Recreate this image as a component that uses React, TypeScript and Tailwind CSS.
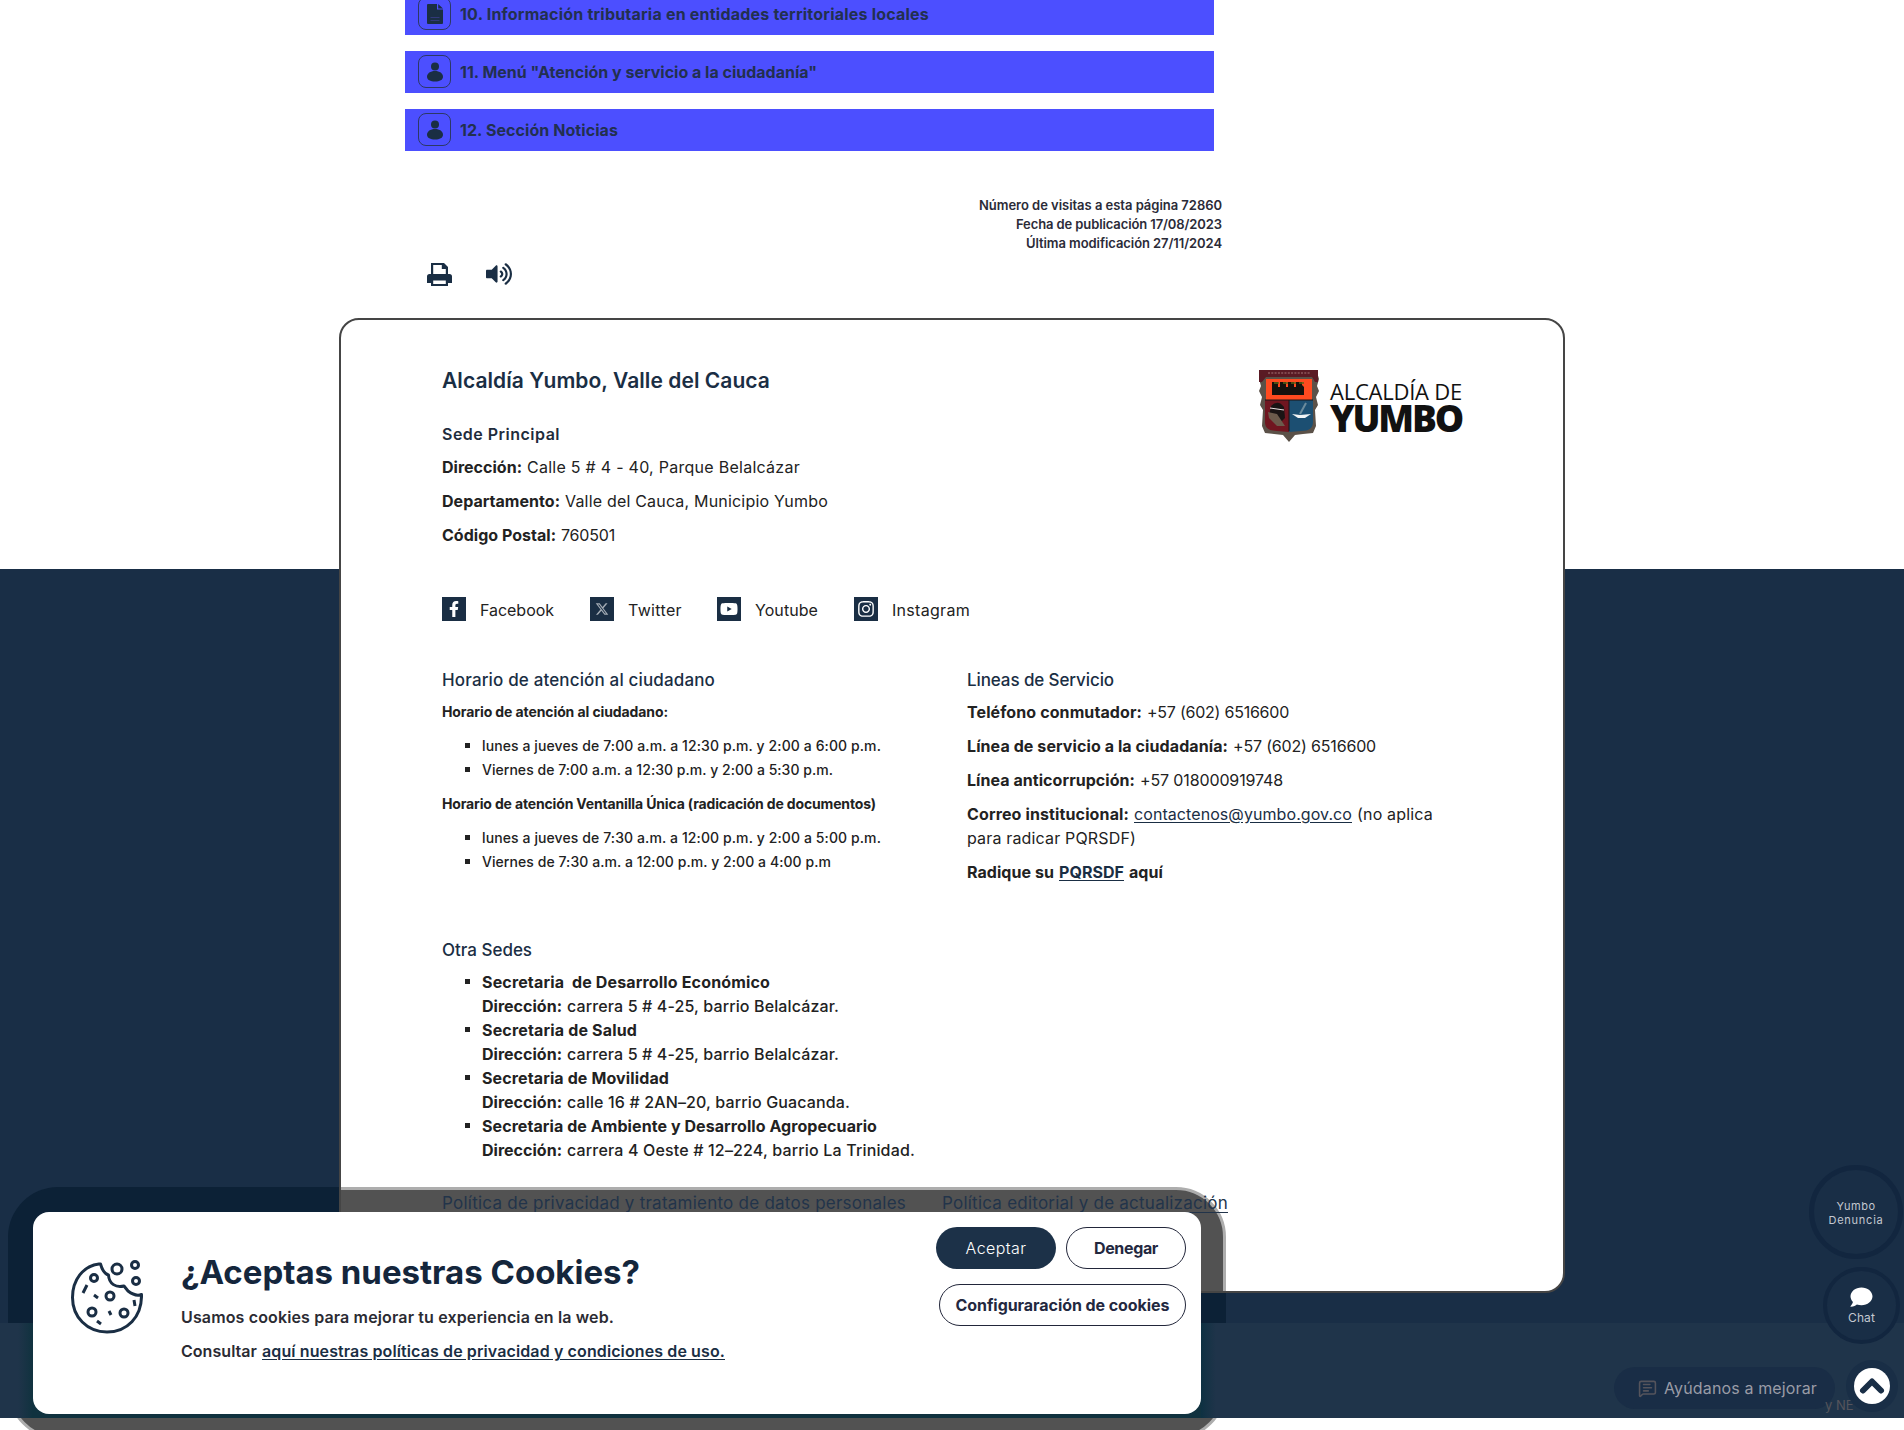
import { useLayoutEffect, useRef, useState } from "react";
import type { ReactNode } from "react";
import { FaFacebookF, FaInstagram, FaYoutube, FaComment, FaVolumeUp } from "react-icons/fa";
import { FaXTwitter } from "react-icons/fa6";
import { ChevronUp, MessageSquareText } from "lucide-react";

/** A run of text whose letter spacing is computed so that it fills `w` pixels. */
function Fit({ w, children, className = "" }: { w: number; children: string; className?: string }) {
  const ref = useRef<HTMLSpanElement>(null);
  const [spacing, setSpacing] = useState(0);
  useLayoutEffect(() => {
    const el = ref.current;
    if (!el) return;
    el.style.letterSpacing = "0px";
    const natural = el.getBoundingClientRect().width;
    const next = (w - natural) / children.length;
    el.style.letterSpacing = `${next}px`;
    setSpacing(next);
  }, [w, children]);
  return (
    <span ref={ref} className={`inline-block whitespace-pre ${className}`} style={{ letterSpacing: spacing }}>
      {children}
    </span>
  );
}

function FileGlyph() {
  return (
    <svg viewBox="0 0 16 20" className="h-5 w-4" fill="#1a2e44">
      <path d="M0 1a1 1 0 0 1 1-1h9v5.500h6V19a1 1 0 0 1-1 1H1a1 1 0 0 1-1-1z" />
      <path d="M11.200 0 16 4.500h-4.800z" />
      <path d="M3.500 13.500h9M3.500 16.500h9" stroke="#4141a0" strokeWidth=".6" />
    </svg>
  );
}

function PersonGlyph() {
  return (
    <svg viewBox="0 0 16 20" className="h-5 w-4" fill="#1a2e44">
      <circle cx="8" cy="4.500" r="4" />
      <path d="M8 9c4.600 0 8 2.300 8 5.800 0 3.200-3.400 4.700-8 4.700s-8-1.500-8-4.700C0 11.300 3.400 9 8 9z" />
    </svg>
  );
}

function MenuBar({ icon, w, children }: { icon: ReactNode; w: number; children: string }) {
  return (
    <div className="flex h-[42px] w-[809px] items-center bg-[#4c4fff] pb-px pl-[13px]">
      <div className="flex size-[33px] items-center justify-center rounded-lg border border-[#2c3866]">{icon}</div>
      <Fit w={w} className="ml-[9px] text-base font-bold text-[#22304f]">{children}</Fit>
    </div>
  );
}

function Shield() {
  return (
    <svg viewBox="0 0 62 72" className="h-[72px] w-[62px]">
      <path
        d="M3 2h56l2 7-2 7 2 5-3 6 2 8-3 5 1 16-3 7-10 1-8 1-6 7-6-7-9-1-9-1-3-7 1-16-3-5 2-8-3-6 2-5-2-7z"
        fill="#5b5148"
      />
      <path d="M1 0h59v12h-3l-3-5H8l-4 5H1z" fill="#5a1a24" />
      <path d="M10 3h42" stroke="#b98c8c" strokeWidth="2" strokeDasharray="2 1.300" opacity=".4" />
      <path d="M8 9h46v21H8z" fill="#ff4a1f" />
      <path d="M14 25V12h6v5h2v-5h6v5h2v-5h6v5h2v-5h6v3l2 2v8z" fill="#15110d" />
      <path d="M16 13h5M25 13h5M33 13h5M41 13h5" stroke="#5d6415" strokeWidth="1.500" />
      <path d="M7 30h24v32l-12-1c-8 0-12-3-12-9z" fill="#701620" />
      <path d="M31 30h24v22c0 6-4 9-12 9l-12 1z" fill="#1c4f72" />
      <path d="M31 30v31M7 30h48" stroke="#1b1414" />
      <path d="M13 36q7-7 13 1l1 11-6 6-5-4-5-4z" fill="#1a1414" />
      <path d="M10 42l9 2 8 12-8 0-8-8z" fill="#6c5b4c" />
      <path d="M12 38l14 2" stroke="#e8dede" strokeWidth="1.200" />
      <path d="M34 44l8 1 11-1-6 4h-7z" fill="#f2f4f5" />
      <path d="M42 44l6-11" stroke="#6c8b9c" strokeWidth="2" />
    </svg>
  );
}

function Cookie() {
  return (
    <svg viewBox="0 0 72 74" className="h-[74px] w-[72px]" fill="none" stroke="#1a2e44" strokeWidth="3">
      <path
        strokeLinejoin="round"
        d="M28 4C12 6 1.500 20 1.500 37.500 1.500 57 16 72 36 72s35-15 34.500-37.500c-4 1.500-9 0-13.500-3.500L53 26c-8 2-15-2-15.500-11-4-1-6-4-8-11z"
      />
      <circle cx="46" cy="9" r="5" />
      <circle cx="64" cy="5" r="3.500" />
      <circle cx="65" cy="21" r="3.500" />
      <circle cx="23" cy="18" r="3.500" />
      <circle cx="39" cy="36" r="4" />
      <circle cx="21" cy="52" r="4" />
      <circle cx="53" cy="53" r="4" />
      <path d="M16 25l-4 8M23 35l4 3M63 40l1 6M38 51l2 4M26 61l4 3" />
    </svg>
  );
}

function Printer() {
  return (
    <svg viewBox="0 0 25 23" className="h-[23px] w-[25px]" fill="#1a2e44" fillRule="evenodd">
      <path d="M4 0h13l4 4v7h1.500A2.500 2.500 0 0 1 25 13.500V20h-4v3H4v-3H0v-6.500A2.500 2.500 0 0 1 2.500 11H4zM6.200 2v9h12.600V6h-4V2zM6.200 17.500V21h12.600v-3.500z" />
    </svg>
  );
}

function Social({ icon, w, gap, children }: { icon: ReactNode; w: number; gap: string; children: string }) {
  return (
    <div className={`flex items-center ${gap}`}>
      <div className="flex size-6 items-center justify-center bg-[#1a2e44] text-white">{icon}</div>
      <Fit w={w} className="ml-3.5 pt-0.5 text-[16px]">{children}</Fit>
    </div>
  );
}

function Field({ label, lw, value, vw, className = "" }: { label: string; lw: number; value: string; vw: number; className?: string }) {
  return (
    <div className={`flex gap-[5px] ${className}`}>
      <Fit w={lw} className="font-bold">{label}</Fit>
      <Fit w={vw}>{value}</Fit>
    </div>
  );
}

function Bullet({ children, className = "" }: { children: ReactNode; className?: string }) {
  return (
    <li className={`flex ${className}`}>
      <span className="mt-[9px] mr-[12px] ml-[23px] size-[5px] shrink-0 bg-[#222]" />
      <div>{children}</div>
    </li>
  );
}

const branches = [
  { name: "Secretaria  de Desarrollo Económico", nw: 288, address: "carrera 5 # 4-25, barrio Belalcázar.", aw: 272 },
  { name: "Secretaria de Salud", nw: 155, address: "carrera 5 # 4-25, barrio Belalcázar.", aw: 272 },
  { name: "Secretaria de Movilidad", nw: 187, address: "calle 16 # 2AN–20, barrio Guacanda.", aw: 283 },
  { name: "Secretaria de Ambiente y Desarrollo Agropecuario", nw: 395, address: "carrera 4 Oeste # 12–224, barrio La Trinidad.", aw: 348 },
];

export default function App() {
  return (
    <div className="relative h-[1430px] w-[1904px] overflow-hidden bg-white font-['Inter','Liberation_Sans',sans-serif] text-base leading-6 text-[#222]">
      {/* Dialog shade over the white page edge */}
      <div className="absolute top-[1187px] left-2 h-[252px] w-[1218px] rounded-[50px] border-[3px] border-[#adadad] bg-[#525252]" />

      {/* Navy band behind the footer card */}
      <div className="absolute top-[569px] left-0 h-[849px] w-full overflow-hidden bg-[#192e46]">
        <div className="absolute top-[618px] left-2 h-[252px] w-[1218px] rounded-[50px] bg-[#0c2136]" />
        <div className="absolute top-[754px] left-0 h-[95px] w-full overflow-hidden bg-[#1f344a]">
          <div className="absolute -top-5 left-[18px] h-[130px] w-[1198px] bg-linear-to-r from-[#1f344a] via-[#10323f] via-[1.2%] to-[#10323f]" />
          <div className="absolute -top-5 left-[1201px] h-[130px] w-[15px] bg-linear-to-r from-[#0d3142] to-[#1f344a]" />
        </div>
      </div>

      <main className="relative flow-root h-[318px] pl-[405px]">
        <div className="-mt-[7px] flex flex-col gap-4">
          <MenuBar icon={<FileGlyph />} w={469}>10. Información tributaria en entidades territoriales locales</MenuBar>
          <MenuBar icon={<PersonGlyph />} w={357}>11. Menú "Atención y servicio a la ciudadanía"</MenuBar>
          <MenuBar icon={<PersonGlyph />} w={158}>12. Sección Noticias</MenuBar>
        </div>
        <div className="mt-[45px] flex w-[817px] flex-col items-end text-[13px] leading-[19px] font-semibold text-[#2b2b38]">
          <Fit w={243}>Número de visitas a esta página 72860</Fit>
          <Fit w={206}>Fecha de publicación 17/08/2023</Fit>
          <Fit w={196}>Última modificación 27/11/2024</Fit>
        </div>
        <div className="mt-2 ml-[22px] flex items-center gap-[34px]">
          <Printer />
          <FaVolumeUp className="size-[26px] text-[#1a2e44]" />
        </div>
      </main>

      <footer className="relative ml-[339px] h-[975px] w-[1226px] overflow-hidden rounded-[20px] border-2 border-[#454545] bg-white">
        <div className="absolute top-[867px] -left-[333px] h-[252px] w-[1218px] rounded-[50px] border-[3px] border-[#adadad] bg-[#525252]" />
        <div className="relative pt-[46px] pl-[101px]">
          <div className="flex justify-between pr-[101px]">
            <div>
              <h2 className="h-[30px] text-[21px] leading-[30px] font-semibold text-[#1a2e44]"><Fit w={328}>Alcaldía Yumbo, Valle del Cauca</Fit></h2>
              <h3 className="mt-[26px] h-6 font-semibold text-[#1f2c3c]"><Fit w={118}>Sede Principal</Fit></h3>
              <div className="mt-[9px] flex flex-col gap-2.5">
                <Field label="Dirección:" lw={80} value="Calle 5 # 4 - 40, Parque Belalcázar" vw={273} />
                <Field label="Departamento:" lw={118} value="Valle del Cauca, Municipio Yumbo" vw={263} />
                <Field label="Código Postal:" lw={114} value="760501" vw={54} />
              </div>
            </div>
            <div className="mt-1 flex gap-2.5 font-['Open_Sans',sans-serif] text-[#111]">
              <Shield />
              <div className="w-[132px] pt-2">
                <div className="h-[26px] text-[22px] leading-[26px] font-medium"><Fit w={132} className="h-[26px]">ALCALDÍA DE</Fit></div>
                <div className="h-7 text-[37px] leading-7 font-extrabold"><Fit w={132} className="h-7">YUMBO</Fit></div>
              </div>
            </div>
          </div>

          <div className="mt-[49px] flex">
            <Social icon={<FaFacebookF className="size-4" />} w={74} gap="w-[148px]">Facebook</Social>
            <Social icon={<FaXTwitter className="size-3.5 opacity-60" />} w={54} gap="w-[127px]">Twitter</Social>
            <Social icon={<FaYoutube className="size-[18px]" />} w={63} gap="w-[137px]">Youtube</Social>
            <Social icon={<FaInstagram className="size-[18px]" />} w={78} gap="w-[150px]">Instagram</Social>
          </div>

          <div className="mt-[46px] flex h-[270px]">
            <section className="w-[525px]">
              <h3 className="h-6 text-[17px] font-medium text-[#1a2e44]"><Fit w={273}>Horario de atención al ciudadano</Fit></h3>
              <p className="mt-2 text-[14px] leading-6 font-bold"><Fit w={226}>Horario de atención al ciudadano:</Fit></p>
              <ul className="mt-2.5 text-[14px] leading-6 font-medium">
                <Bullet><Fit w={399}>lunes a jueves de 7:00 a.m. a 12:30 p.m. y 2:00 a 6:00 p.m.</Fit></Bullet>
                <Bullet><Fit w={351}>Viernes de 7:00 a.m. a 12:30 p.m. y 2:00 a 5:30 p.m.</Fit></Bullet>
              </ul>
              <p className="mt-2.5 text-[14px] leading-6 font-bold"><Fit w={434}>Horario de atención Ventanilla Única (radicación de documentos)</Fit></p>
              <ul className="mt-2.5 text-[14px] leading-6 font-medium">
                <Bullet><Fit w={399}>lunes a jueves de 7:30 a.m. a 12:00 p.m. y 2:00 a 5:00 p.m.</Fit></Bullet>
                <Bullet><Fit w={349}>Viernes de 7:30 a.m. a 12:00 p.m. y 2:00 a 4:00 p.m</Fit></Bullet>
              </ul>
            </section>
            <section>
              <h3 className="h-6 text-[17px] font-medium text-[#1a2e44]"><Fit w={147}>Lineas de Servicio</Fit></h3>
              <div className="mt-2 flex flex-col gap-2.5">
                <Field label="Teléfono conmutador:" lw={175} value="+57 (602) 6516600" vw={142} />
                <Field label="Línea de servicio a la ciudadanía:" lw={261} value="+57 (602) 6516600" vw={143} />
                <Field label="Línea anticorrupción:" lw={168} value="+57 018000919748" vw={143} />
                <div>
                  <div className="flex h-6 gap-[5px]">
                    <Fit w={162} className="font-bold">Correo institucional:</Fit>
                    <Fit w={218} className="text-[#1a2e44] underline underline-offset-2">contactenos@yumbo.gov.co</Fit>
                    <Fit w={76}>(no aplica</Fit>
                  </div>
                  <div className="h-6"><Fit w={169}>para radicar PQRSDF)</Fit></div>
                </div>
                <div className="flex gap-[5px] font-bold">
                  <Fit w={87}>Radique su</Fit>
                  <Fit w={65} className="text-[#1a2e44] underline underline-offset-2">PQRSDF</Fit>
                  <Fit w={34}>aquí</Fit>
                </div>
              </div>
            </section>
          </div>

          <h3 className="h-6 text-[17px] font-medium text-[#1a2e44]"><Fit w={90}>Otra Sedes</Fit></h3>
          <ul className="mt-2">
            {branches.map((b) => (
              <Bullet key={b.name}>
                <div className="h-6 font-bold"><Fit w={b.nw}>{b.name}</Fit></div>
                <Field label="Dirección:" lw={80} value={b.address} vw={b.aw} className="font-medium" />
              </Bullet>
            ))}
          </ul>

          <div className="mt-[29px] flex gap-9 text-[17px] text-[#22344a] underline underline-offset-[3px]">
            <Fit w={464}>Política de privacidad y tratamiento de datos personales</Fit>
            <Fit w={286}>Política editorial y de actualización</Fit>
          </div>
        </div>
      </footer>

      {/* Cookie dialog */}
      <div className="absolute top-[1212px] left-[33px] flex h-[202px] w-[1168px] rounded-2xl bg-white">
        <div className="mt-[48px] ml-[38px]"><Cookie /></div>
        <div className="mt-10 ml-[38px] w-[755px] font-semibold text-[#2b2b33]">
          <h2 className="h-10 text-[33px] leading-10 font-bold text-[#14263c]"><Fit w={459}>¿Aceptas nuestras Cookies?</Fit></h2>
          <p className="mt-[13px] h-6"><Fit w={433}>Usamos cookies para mejorar tu experiencia en la web.</Fit></p>
          <p className="mt-2.5 flex h-6 gap-[5px]">
            <Fit w={76}>Consultar</Fit>
            <Fit w={463} className="text-[#1a2e44] underline underline-offset-2">aquí nuestras políticas de privacidad y condiciones de uso.</Fit>
          </p>
        </div>
        <div className="mt-[15px] flex w-[250px] flex-col items-end gap-[15px] text-[#23283f]">
          <div className="flex gap-2.5">
            <button className="h-[42px] w-[120px] rounded-full bg-[#1c3148] font-light text-white"><Fit w={61}>Aceptar</Fit></button>
            <button className="h-[42px] w-[120px] rounded-full border border-[#22263a] font-bold"><Fit w={64}>Denegar</Fit></button>
          </div>
          <button className="h-[42px] w-[247px] rounded-full border border-[#22263a] font-bold"><Fit w={214}>Configuraración de cookies</Fit></button>
        </div>
      </div>

      {/* Floating actions */}
      <div className="absolute top-[1165px] left-[1809px] flex size-[94px] flex-col items-center justify-center rounded-full border-[5px] border-[#12263f] bg-[#192e46] pt-0.5 text-[11px] leading-[14px] text-[#c3c8d0]">
        <Fit w={39}>Yumbo</Fit>
        <Fit w={55}>Denuncia</Fit>
      </div>
      <div className="absolute top-[1267px] left-[1823px] flex size-[77px] flex-col items-center rounded-full border-[4px] border-[#12263f] bg-[#192e46] pt-[15px] text-[12px] leading-[14px] text-[#c3c8d0]">
        <FaComment className="h-[22px] w-[23px] text-white" />
        <Fit w={27} className="mt-[3px]">Chat</Fit>
      </div>
      <div className="absolute top-[1367px] left-[1614px] flex h-[42px] w-[221px] items-center rounded-full bg-[#192d46] pl-6 text-[#9a9ca6]">
        <MessageSquareText className="size-[19px] text-[#55545c]" />
        <Fit w={153} className="ml-[7px]">Ayúdanos a mejorar</Fit>
      </div>
      <div className="absolute top-[1393px] left-[1825px] text-[13px] text-[#55545c]">y NE</div>
      <div className="absolute top-[1360px] left-[1846px] flex size-[52px] items-center justify-center rounded-full bg-[#192e46]">
        <div className="flex size-9 items-center justify-center rounded-full bg-white">
          <ChevronUp className="size-9 text-[#192e46]" strokeWidth={4} />
        </div>
      </div>
    </div>
  );
}
